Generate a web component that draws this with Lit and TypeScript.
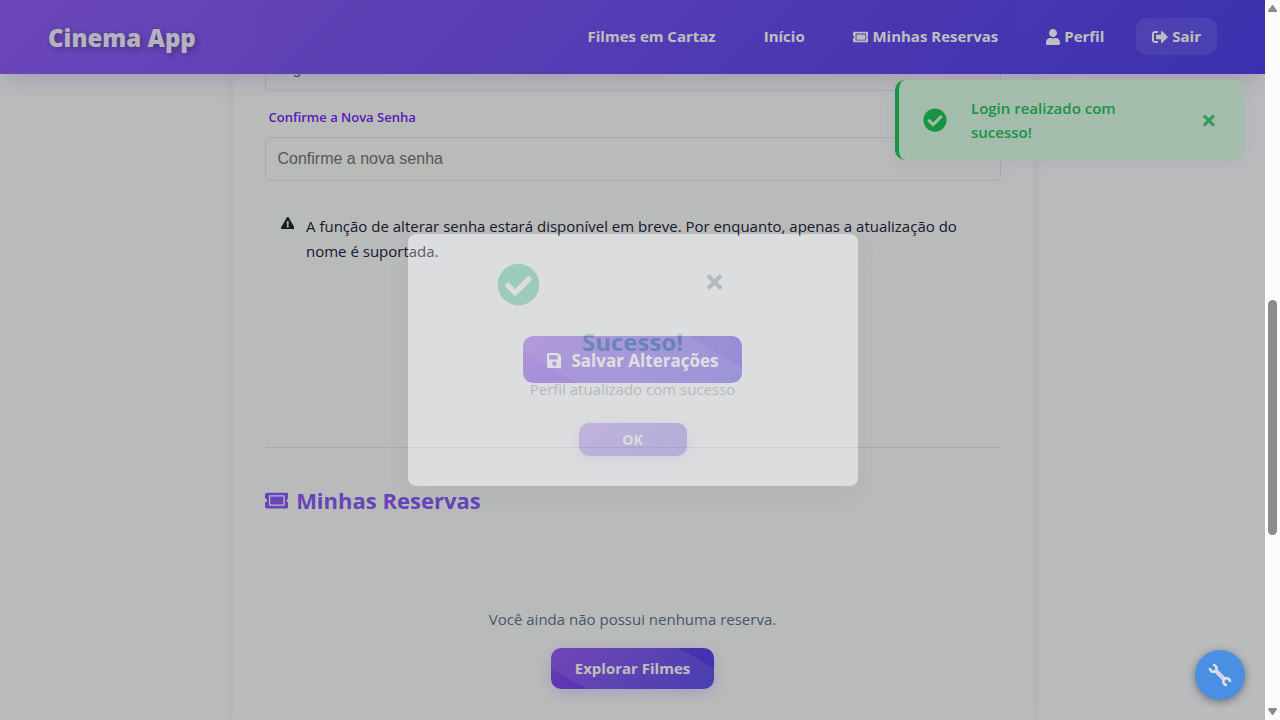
import { LitElement, html, css, svg } from "lit";
import { customElement, property } from "lit/decorators.js";

const ICONS: Record<string, [number, number, string]> = {
  ticket: [576, 512, "M128 160h320v192H128V160zm400 96c0 26.51 21.49 48 48 48v96c0 26.51-21.49 48-48 48H48c-26.51 0-48-21.49-48-48v-96c26.51 0 48-21.49 48-48s-21.49-48-48-48v-96c0-26.51 21.49-48 48-48h480c26.51 0 48 21.49 48 48v96c-26.51 0-48 21.49-48 48zm-48-104c0-13.255-10.745-24-24-24H120c-13.255 0-24 10.745-24 24v208c0 13.255 10.745 24 24 24h336c13.255 0 24-10.745 24-24V152z"],
  user: [448, 512, "M224 256c70.7 0 128-57.3 128-128S294.7 0 224 0 96 57.3 96 128s57.3 128 128 128zm89.6 32h-16.7c-22.2 10.2-46.9 16-72.9 16s-50.6-5.8-72.9-16h-16.7C60.2 288 0 348.2 0 422.4V464c0 26.5 21.5 48 48 48h352c26.5 0 48-21.5 48-48v-41.6c0-74.2-60.2-134.4-134.4-134.4z"],
  exit: [512, 512, "M497 273L329 441c-15 15-41 4.5-41-17v-96H152c-13.3 0-24-10.7-24-24v-96c0-13.3 10.7-24 24-24h136V88c0-21.4 25.9-32 41-17l168 168c9.3 9.4 9.3 24.6 0 34zM192 436v-40c0-6.6-5.4-12-12-12H96c-17.7 0-32-14.3-32-32V160c0-17.7 14.3-32 32-32h84c6.6 0 12-5.4 12-12V76c0-6.6-5.4-12-12-12H96c-53 0-96 43-96 96v192c0 53 43 96 96 96h84c6.6 0 12-5.4 12-12z"],
  check: [512, 512, "M504 256c0 136.967-111.033 248-248 248S8 392.967 8 256 119.033 8 256 8s248 111.033 248 248zM227.314 387.314l184-184c6.248-6.248 6.248-16.379 0-22.627l-22.627-22.627c-6.248-6.249-16.379-6.249-22.628 0L216 308.118l-70.059-70.059c-6.248-6.248-16.379-6.248-22.628 0l-22.627 22.627c-6.248 6.248-6.248 16.379 0 22.627l104 104c6.249 6.249 16.379 6.249 22.628.001z"],
  times: [352, 512, "M242.72 256l100.07-100.07c12.28-12.28 12.28-32.19 0-44.48l-22.24-22.24c-12.28-12.28-32.19-12.28-44.48 0L176 189.28 75.93 89.21c-12.28-12.28-32.19-12.28-44.48 0L9.21 111.45c-12.28 12.28-12.28 32.19 0 44.48L109.28 256 9.21 356.07c-12.28 12.28-12.28 32.19 0 44.48l22.24 22.24c12.28 12.28 32.2 12.28 44.48 0L176 322.72l100.07 100.07c12.28 12.28 32.2 12.28 44.48 0l22.24-22.24c12.28-12.28 12.28-32.19 0-44.48L242.72 256z"],
  save: [448, 512, "M433.941 129.941l-83.882-83.882A48 48 0 0 0 316.118 32H48C21.49 32 0 53.49 0 80v352c0 26.51 21.49 48 48 48h352c26.51 0 48-21.49 48-48V163.882a48 48 0 0 0-14.059-33.941zM224 416c-35.346 0-64-28.654-64-64 0-35.346 28.654-64 64-64s64 28.654 64 64c0 35.346-28.654 64-64 64zm96-304.52V212c0 6.627-5.373 12-12 12H76c-6.627 0-12-5.373-12-12V108c0-6.627 5.373-12 12-12h228.52c3.183 0 6.235 1.264 8.485 3.515l3.48 3.48A11.996 11.996 0 0 1 320 111.48z"],
  warning: [576, 512, "M569.517 440.013C587.975 472.007 564.806 512 527.94 512H48.054c-36.937 0-59.999-40.055-41.577-71.987L246.423 23.985c18.467-32.009 64.72-31.951 83.154 0l239.94 416.028zM288 354c-25.405 0-46 20.595-46 46s20.595 46 46 46 46-20.595 46-46-20.595-46-46-46zm-43.673-165.346l7.418 136c.347 6.364 5.609 11.346 11.982 11.346h48.546c6.373 0 11.635-4.982 11.982-11.346l7.418-136c.375-6.874-5.098-12.654-11.982-12.654h-63.383c-6.884 0-12.356 5.78-11.981 12.654z"],
};

@customElement("app-icon")
export class AppIcon extends LitElement {
  @property() name = "check";
  static styles = css`
    :host { display: inline-flex; flex: none; }
    .glyph { height: 1em; width: auto; fill: currentColor; display: block; }
  `;
  render() {
    const [w, h, d] = ICONS[this.name];
    return html`<svg class="glyph" viewBox="0 0 ${w} ${h}" aria-hidden="true">${svg`<path d=${d}></path>`}</svg>`;
  }
}

@customElement("app-root")
export class AppRoot extends LitElement {
  static styles = css`
    :host {
      display: grid;
      grid-template-columns: minmax(0, 1fr) 15px;
      height: 100vh;
      overflow: hidden;
      position: relative;
      font-family: "Open Sans", "Noto Sans", sans-serif;
      font-size: 15px;
      line-height: 25px;
      color: #1e293b;
    }
    * { box-sizing: border-box; }
    button { font: inherit; border: 0; cursor: pointer; }
    h2, p, hr { margin: 0; }
    .page {
      position: relative;
      display: flex;
      flex-direction: column;
      overflow: hidden;
      background: #f8fafb;
    }
    .header {
      position: relative;
      z-index: 1;
      flex: none;
      height: 74px;
      padding: 0 48px 1px;
      display: flex;
      align-items: center;
      justify-content: space-between;
      background: linear-gradient(135deg, #905ff7, #4f41e9);
      box-shadow: 0 8px 24px -4px rgba(109, 70, 200, 0.25);
    }
    .brand {
      padding-top: 2px;
      font-size: 24px;
      font-weight: 800;
      color: #f1eefb;
      text-decoration: none;
      text-shadow: 2px 2px 6px rgba(0, 0, 0, 0.3);
    }
    .nav { display: flex; align-items: center; gap: 16px; font-weight: 700; }
    .link {
      display: flex;
      align-items: center;
      gap: 4px;
      height: 37px;
      padding: 0 16px;
      color: #fff;
      text-decoration: none;
      white-space: nowrap;
    }
    .nav-icon { font-size: 16px; }
    .nav-ticket { font-size: 14px; }
    .logout { border-radius: 10px; background: rgba(255, 255, 255, 0.1); }
    .main { flex: 1; min-height: 0; padding: 0 32px; }
    .card {
      max-width: 800px;
      min-height: 100%;
      margin: -27px auto 0;
      padding: 0 32px 32px;
      background: #f8fafb;
      box-shadow: 0 4px 18px rgba(0, 0, 0, 0.07);
      display: flex;
      flex-direction: column;
    }
    .form { display: flex; flex-direction: column; }
    .label {
      padding: 0 4px;
      margin: 14px 0 7px;
      font-size: 13px;
      font-weight: 600;
      color: #7429eb;
    }
    .field {
      width: 100%;
      height: 44px;
      padding: 0 12px;
      border: 1px solid #e0e3ee;
      border-radius: 4px;
      background: #f8faf8;
      font: 16px "Liberation Sans", Arial, sans-serif;
    }
    .field::placeholder { color: #757575; opacity: 1; }
    .alert {
      display: flex;
      gap: 12px;
      margin-top: 17px;
      padding: 16px;
      color: #1e2638;
    }
    .alert-icon { font-size: 12px; padding-top: 3px; }
    .save-row { display: flex; justify-content: center; padding: 56px 0 64px; }
    .button {
      --edge: 15%;
      --far: 85%;
      display: flex;
      align-items: center;
      justify-content: center;
      gap: 10px;
      border-radius: 10px;
      color: #fff;
      font-weight: 700;
      text-decoration: none;
      background:
        linear-gradient(30deg, transparent var(--edge), rgba(255, 255, 255, 0.1) var(--edge), rgba(255, 255, 255, 0.1) var(--far), transparent var(--far)),
        linear-gradient(135deg, #8a4df2, #4f41e9);
    }
    .save { --edge: 18%; --far: 82%; height: 47px; padding: 2px 24px 0; font-size: 17px; opacity: 0.7; }
    .divider { border: 0; border-top: 1px solid #e2e4e8; }
    .section-title {
      display: flex;
      align-items: center;
      gap: 8px;
      margin-top: 36px;
      font-size: 22px;
      line-height: 32px;
      color: #8b5cf6;
    }
    .section-icon { font-size: 21px; }
    .empty {
      display: flex;
      flex-direction: column;
      align-items: center;
      gap: 16px;
      padding-top: 91px;
      color: #64748b;
    }
    .explore { height: 41px; padding: 0 24px; box-shadow: 0 4px 15px rgba(124, 58, 237, 0.2); }
    .toast {
      position: absolute;
      top: 80px;
      right: 20px;
      z-index: 2;
      width: 350px;
      height: 80px;
      padding: 0 24px;
      display: flex;
      align-items: center;
      gap: 24px;
      border-left: 4px solid #22c55e;
      border-radius: 10px;
      background: #dcfce7;
      color: #22c55e;
      font-weight: 600;
      line-height: 24px;
      box-shadow: 0 4px 15px rgba(124, 58, 237, 0.08);
    }
    .toast-icon { font-size: 24px; }
    .toast-text { flex: 0 1 176px; }
    .toast-close { margin-left: auto; padding: 4px 6px; background: none; color: inherit; opacity: 0.8; display: flex; font-size: 17px; }
    .overlay {
      position: absolute;
      inset: 0;
      z-index: 3;
      display: grid;
      place-items: center;
      background: rgba(0, 0, 0, 0.5);
      opacity: 0.5;
    }
    .modal {
      width: 450px;
      padding: 28px 28px 30px;
      border-radius: 8px;
      background: #fff;
      opacity: 0.53;
      box-shadow: 0 10px 24px rgba(0, 0, 0, 0.2);
      display: flex;
      flex-direction: column;
      align-items: center;
    }
    .modal-top {
      align-self: stretch;
      display: flex;
      justify-content: space-between;
      align-items: center;
      padding: 0 103px 0 61px;
      height: 44px;
    }
    .modal-icon { font-size: 43px; color: #10b981; }
    .modal-close { padding: 4px 4px 8px; background: none; color: #64748b; font-size: 22px; display: flex; }
    .modal-title { margin-top: 20px; font-size: 24px; line-height: 32px; color: #10b981; }
    .modal-text { margin-top: 19px; line-height: 24px; color: #6b7280; }
    .ok { --edge: 0%; --far: 92%; width: 108px; height: 33px; margin-top: 22px; font-size: 14px; box-shadow: 0 4px 15px rgba(124, 58, 237, 0.3); }
    .tools {
      position: absolute;
      right: 20px;
      bottom: 20px;
      z-index: 4;
      width: 50px;
      height: 50px;
      padding: 0;
      display: grid;
      place-items: center;
      border-radius: 50%;
      background: #4a90e2;
      box-shadow: 0 2px 8px rgba(0, 0, 0, 0.4);
    }
    .wrench { width: 24px; height: 24px; }
    .jaw { fill: none; stroke: #e0dcec; stroke-width: 2.6px; }
    .shaft { stroke: #e3d3ee; stroke-width: 4px; }
    .scrollbar {
      display: flex;
      flex-direction: column;
      align-items: center;
      justify-content: space-between;
      padding: 4px 0;
      background: #fcfcfc;
    }
    .arrow { width: 9px; height: 8px; fill: #8b8b8b; }
    .track { flex: 1; display: flex; flex-direction: column; }
    .before { flex: 288; }
    .thumb { flex: 235; width: 9px; border-radius: 5px; background: #8b8b8b; }
    .after { flex: 173; }
  `;

  render() {
    return html`
      <div class="page">
        <header class="header">
          <a class="brand" href="#">Cinema App</a>
          <nav class="nav">
            <a class="link" href="#">Filmes em Cartaz</a>
            <a class="link" href="#">Início</a>
            <a class="link" href="#"><app-icon class="nav-ticket" name="ticket"></app-icon>Minhas Reservas</a>
            <a class="link" href="#"><app-icon class="nav-icon" name="user"></app-icon>Perfil</a>
            <button class="link logout"><app-icon class="nav-icon" name="exit"></app-icon>Sair</button>
          </nav>
        </header>
        <main class="main">
          <div class="card">
            <form class="form">
              <input class="field" type="password" aria-label="Nova Senha" placeholder="Digite a nova senha" />
              <label class="label" for="confirm">Confirme a Nova Senha</label>
              <input class="field" id="confirm" type="password" placeholder="Confirme a nova senha" />
              <div class="alert">
                <app-icon class="alert-icon" name="warning"></app-icon>
                <p>A função de alterar senha estará disponível em breve. Por enquanto, apenas a atualização do nome é suportada.</p>
              </div>
              <div class="save-row">
                <button class="button save" type="button"><app-icon name="save"></app-icon>Salvar Alterações</button>
              </div>
            </form>
            <hr class="divider" />
            <h2 class="section-title"><app-icon class="section-icon" name="ticket"></app-icon>Minhas Reservas</h2>
            <div class="empty">
              <p>Você ainda não possui nenhuma reserva.</p>
              <a class="button explore" href="#">Explorar Filmes</a>
            </div>
          </div>
        </main>
        <div class="toast" role="status">
          <app-icon class="toast-icon" name="check"></app-icon>
          <span class="toast-text">Login realizado com sucesso!</span>
          <button class="toast-close" aria-label="Fechar aviso"><app-icon name="times"></app-icon></button>
        </div>
        <div class="overlay">
          <div class="modal" role="dialog" aria-labelledby="modal-title">
            <div class="modal-top">
              <app-icon class="modal-icon" name="check"></app-icon>
              <button class="modal-close" aria-label="Fechar"><app-icon name="times"></app-icon></button>
            </div>
            <h2 class="modal-title" id="modal-title">Sucesso!</h2>
            <p class="modal-text">Perfil atualizado com sucesso</p>
            <button class="button ok">OK</button>
          </div>
        </div>
        <button class="tools" aria-label="Ferramentas">
          <svg class="wrench" viewBox="0 0 24 24" aria-hidden="true">
            <path class="shaft" d="M7.500 7.500 L16.500 16.500"></path>
            <path class="jaw" d="M1.800 5 C2 8.500 5.500 9.800 7.600 7.800 C9.800 5.500 8.500 2.300 5 1.800"></path>
            <path class="jaw" d="M1.800 5 C2 8.500 5.500 9.800 7.600 7.800 C9.800 5.500 8.500 2.300 5 1.800" transform="rotate(180 12 12)"></path>
          </svg>
        </button>
      </div>
      <div class="scrollbar" aria-hidden="true">
        <svg class="arrow" viewBox="0 0 9 8"><path d="M4.500 0.500 L9 6.500 Q9 8 8 8 H1 Q0 8 0 6.500 Z"></path></svg>
        <div class="track"><div class="before"></div><div class="thumb"></div><div class="after"></div></div>
        <svg class="arrow" viewBox="0 0 9 8"><path d="M4.500 7.500 L9 1.500 Q9 0 8 0 H1 Q0 0 0 1.500 Z"></path></svg>
      </div>
    `;
  }
}
